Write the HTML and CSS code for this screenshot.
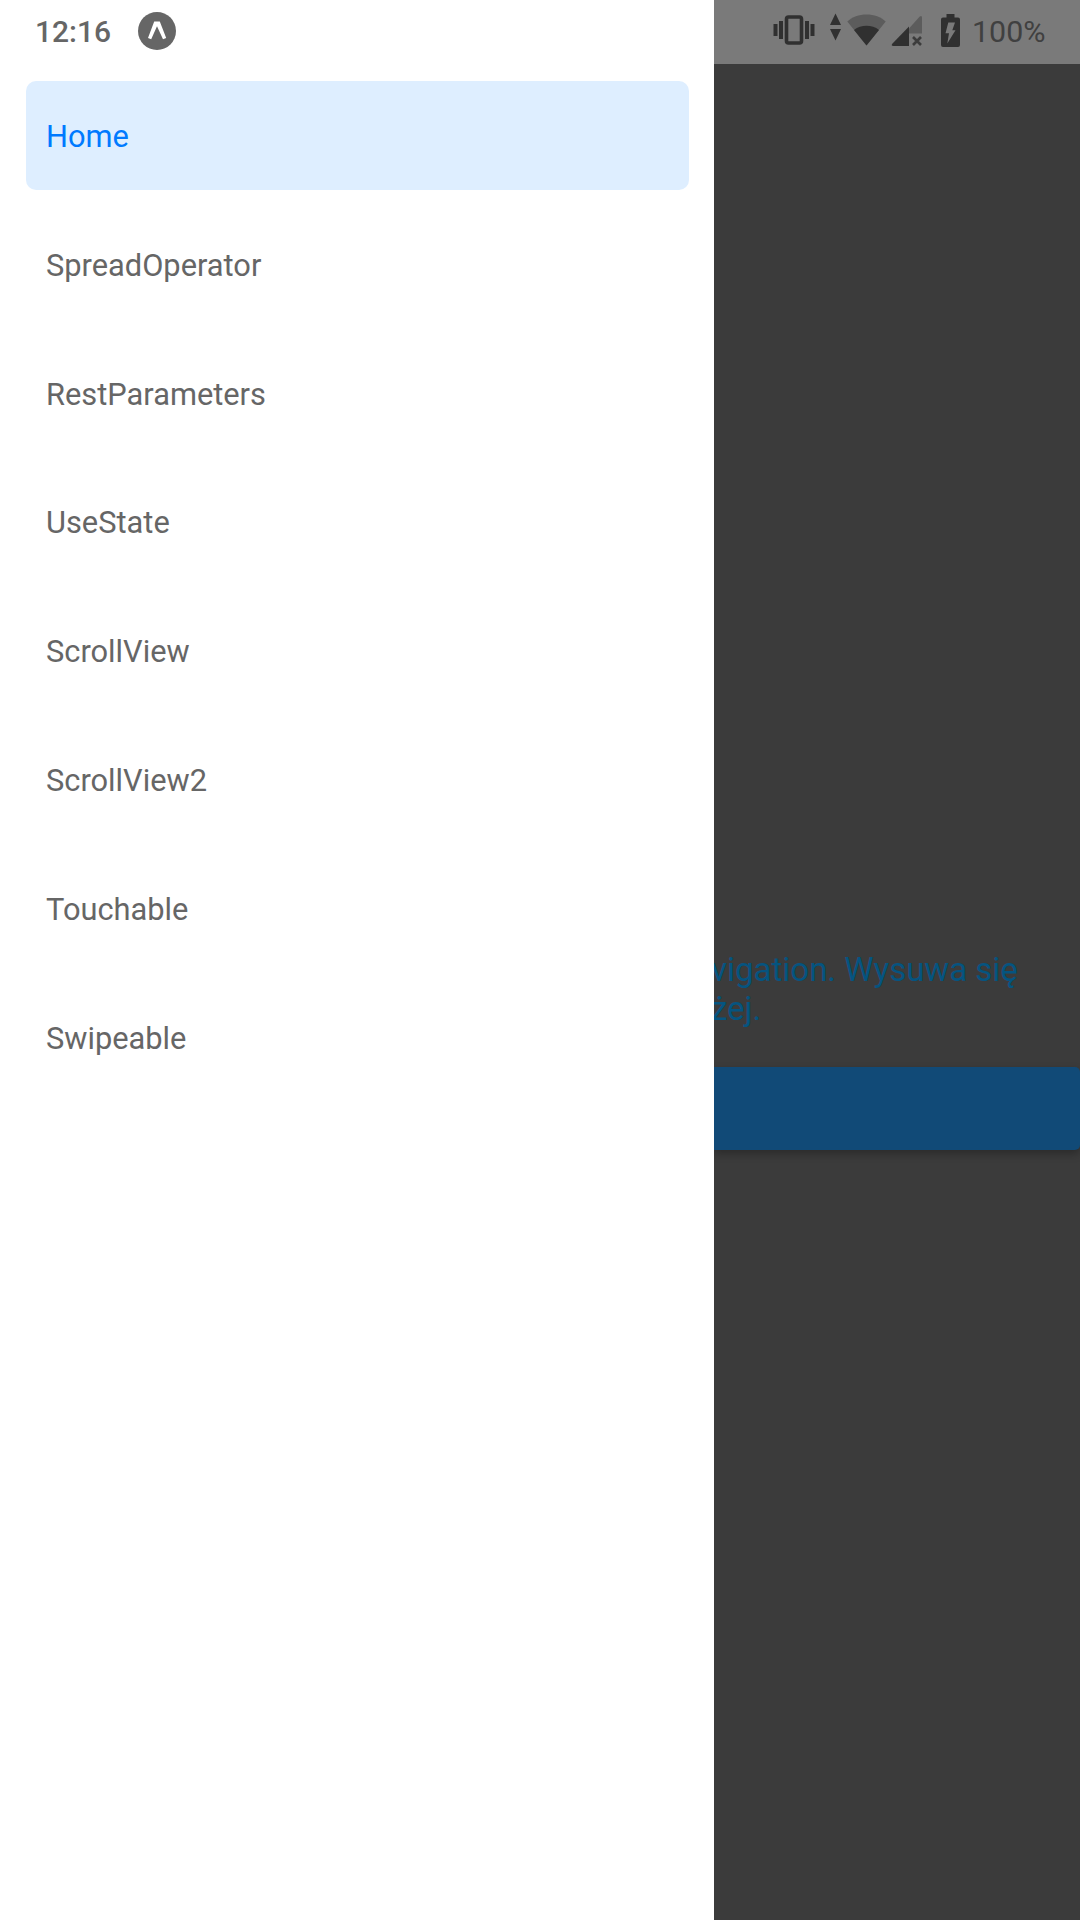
FILE: index.html
```html
<!DOCTYPE html>
<html lang="pl">
<head>
<meta charset="utf-8">
<title>Home</title>
<link rel="stylesheet" href="styles.css">
</head>
<body>
<div class="screen">
  <aside class="drawer">
    <div class="status status-left">
      <span class="clock">12:16</span>
      <svg class="app-icon" width="38" height="38" viewBox="0 0 38 38"><circle cx="19" cy="19" r="19" fill="#666"/><path d="M10 26 L16.2 9.5 H21.8 L28.2 26 L25 27.3 L19 14.2 L13.2 27.3 Z" fill="#fff"/></svg>
    </div>
    <nav class="menu">
      <a class="item active">Home</a>
      <a class="item">SpreadOperator</a>
      <a class="item">RestParameters</a>
      <a class="item">UseState</a>
      <a class="item">ScrollView</a>
      <a class="item">ScrollView2</a>
      <a class="item">Touchable</a>
      <a class="item">Swipeable</a>
    </nav>
  </aside>
  <main class="content">
    <div class="status status-right">
      <svg class="vibrate" width="45" height="64" viewBox="0 0 45 64"><rect x="14.5" y="17" width="15" height="26" rx="2" fill="none" stroke="#303030" stroke-width="3.6"/><path d="M1.5 24h4v12h-4zM7 21h4v18h-4zM33 21h4v18h-4zM38.5 24h4v12h-4z" fill="#303030"/></svg>
      <svg class="data" width="15" height="64" viewBox="0 0 15 64"><path d="M7.5 13.5L13 25H2zM7.5 40.5L13 29H2z" fill="#303030"/></svg>
      <svg class="wifi" width="41" height="64" viewBox="0 0 41 64"><path d="M20.5 45.5L1.3 21.5C6 17 13 14.5 20.5 14.5S35 17 39.7 21.5Z" fill="#5c5c5c"/><path d="M20.5 45.5L8 30C11.500 27 16 25.800 20.500 25.800S29.500 27 33 30Z" fill="#303030"/></svg>
      <svg class="cell" width="33" height="64" viewBox="0 0 33 64"><path d="M19 28.500L29.500 16.800Q32 14.500 32 18V33.500H19Z" fill="#5c5c5c"/><path d="M19 26.500V46H3.500Q0.500 46 2.500 43.500Z" fill="#303030"/><path d="M23 37l8 8M31 37l-8 8" stroke="#3c3c3c" stroke-width="2.600"/></svg>
      <svg class="battery" width="21" height="64" viewBox="0 0 21 64"><path d="M6.500 14h8v3.500h3.500q2 0 2 2v25.500q0 2-2 2H3q-2 0-2-2V19.500q0-2 2-2h3.500z" fill="#303030"/><path d="M8.300 22.500H15L12.300 30.300H15.500L7.300 43.500L9 33.300H5.500Z" fill="#7a7a7a"/></svg>
      <span class="percent">100%</span>
    </div>
    <div class="page">
      <p class="note">vigation. Wysuwa się<br>żej.</p>
      <div class="button"></div>
    </div>
  </main>
</div>
</body>
</html>
```
FILE: styles.css
```css
* { box-sizing: border-box; }
body { margin: 0; font-family: Roboto, sans-serif; }
.screen { display: flex; width: 1080px; height: 1920px; overflow: hidden; }
.drawer { width: 714px; background: #fff; }
.status { display: flex; align-items: center; height: 64px; font-size: 30px; font-weight: 500; line-height: 64px; }
.status-left { padding-left: 35px; color: #666; }
.clock { width: 103px; }
.app-icon { margin-bottom: 2px; }
.menu { display: flex; flex-direction: column; gap: 19.8px; padding: 17px 25px 0 26px; }
.item { height: 109px; padding-left: 20px; border-radius: 10px; color: #666; font-size: 30.800px; line-height: 112px; }
.active { background: #deeeff; color: #007aff; }
.content { display: flex; flex-direction: column; width: 366px; overflow: hidden; background: #3b3b3b; }
.status-right { flex: none; padding-left: 58px; background: #7a7a7a; color: #404040; }
.status-right svg { flex: none; }
.data { margin-left: 11px; }
.wifi { margin-left: 3px; }
.cell { margin-left: 3px; }
.battery { margin-left: 17px; }
.percent { margin-left: 11px; font-size: 30.400px; font-weight: 400; }
.page { padding-top: 886px; }
.note { margin: 0 0 39px -3px; color: #055480; font-size: 33px; line-height: 39px; white-space: nowrap; }
.button { height: 83px; border-radius: 0 5px 5px 0; background: #114a77; box-shadow: 0 4px 8px rgba(0, 0, 0, .28); }
```
